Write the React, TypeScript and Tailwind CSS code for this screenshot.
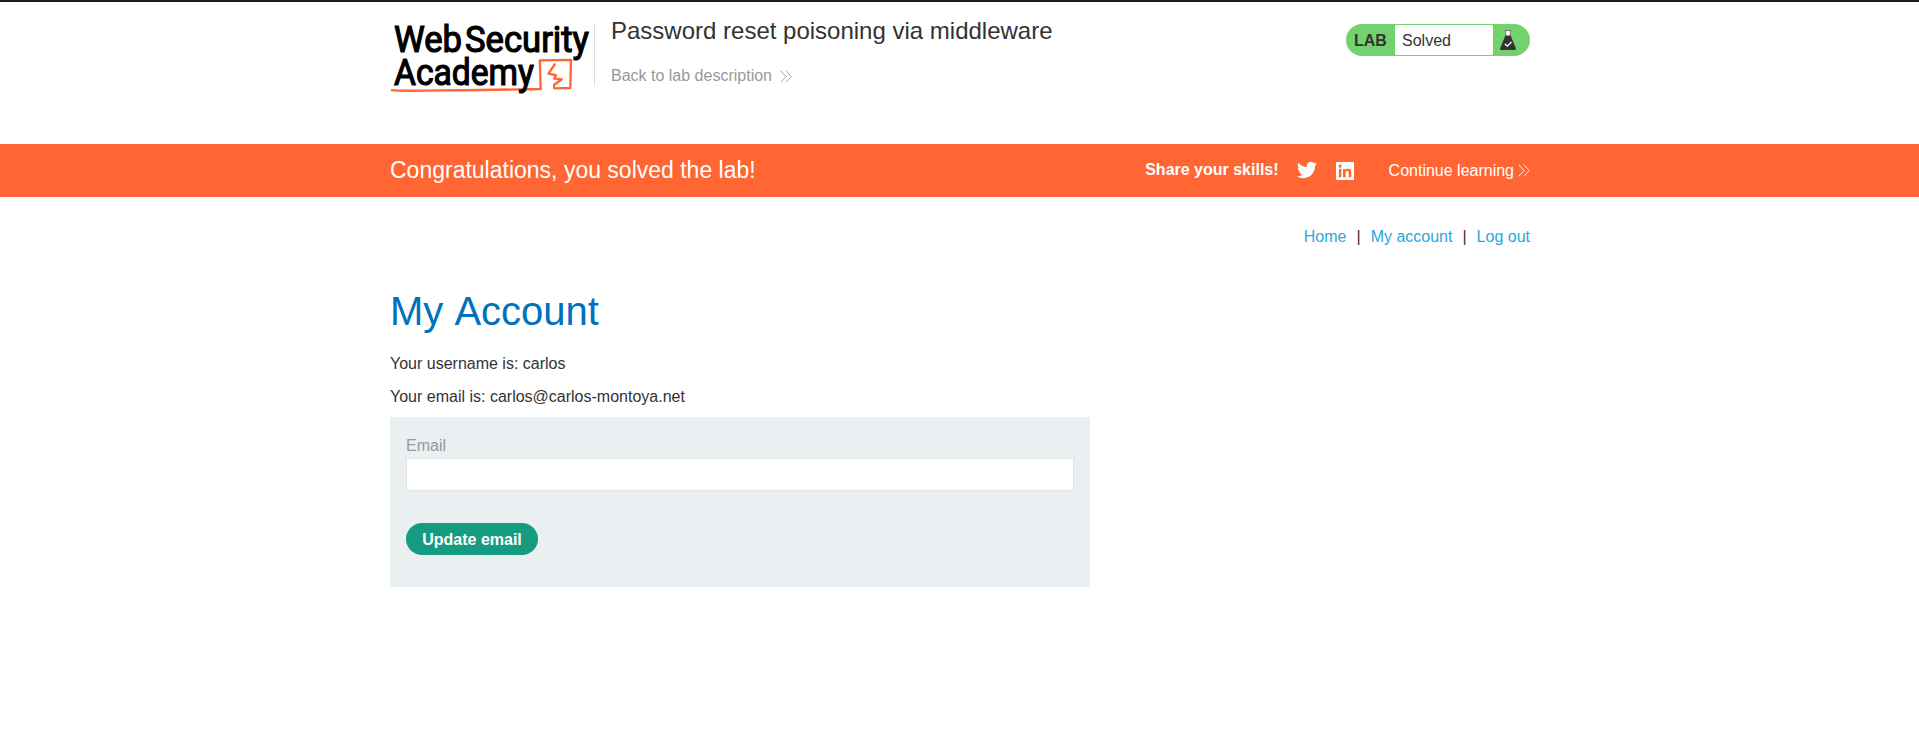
import React from "react";

function Logo() {
  return (
    <svg width="206" height="80" viewBox="390 18 206 80" className="block shrink-0 overflow-visible" aria-label="Web Security Academy">
      <g fill="none" stroke="#ff6633" strokeLinejoin="round">
        <path d="M391 90.2 C402 91.6 440 90.2 480 90 L540.7 89 L539.8 60.3 L571 59.8 L570.3 88 L554.3 88.3 L554 85 L561.8 79.3 L554.2 78.6 L556 75.2 L548.5 73.6 L555.3 63.5" strokeWidth="2.3" />
      </g>
      <g fill="#000" stroke="#000" strokeWidth="1.2" fontFamily="Roboto, 'Liberation Sans', sans-serif" fontWeight="400" fontSize="36">
        <text x="394" y="52" textLength="68" lengthAdjust="spacingAndGlyphs">Web</text>
        <text x="465" y="52" textLength="124" lengthAdjust="spacingAndGlyphs">Security</text>
        <text x="394" y="85" textLength="140" lengthAdjust="spacingAndGlyphs">Academy</text>
      </g>
    </svg>
  );
}

function Chevrons({ className }: { className?: string }) {
  return (
    <svg width="12" height="13" viewBox="0 0 12 13" className={className} fill="none" stroke="currentColor" strokeWidth="0.9">
      <path d="M0.8 0.8 L6 6.5 L0.8 12.2 M6 0.8 L11.2 6.5 L6 12.2" />
    </svg>
  );
}

function Flask() {
  return (
    <svg width="16" height="20" viewBox="0 0 16 20">
      <path d="M5.5 1 H10.5 V7 H5.5 Z" fill="#fff" />
      <path d="M4.5 0.5 H11.5 M5.7 1 V7 M10.3 1 V7" stroke="#777" strokeWidth="1" fill="none" />
      <path d="M5.4 5.5 H10.6 L16 18.5 Q16 20 14.8 20 H1.2 Q0 20 0 18.5 Z" fill="#333332" />
      <path d="M4.8 13.8 L7.3 16.2 L11.5 12" stroke="#fff" strokeWidth="1.3" fill="none" />
    </svg>
  );
}

function Twitter() {
  return (
    <svg width="20" height="20" viewBox="0 0 24 24" fill="#fff">
      <path d="M23.95 4.57a10 10 0 0 1-2.82.77 4.96 4.96 0 0 0 2.16-2.72c-.95.55-2 .96-3.13 1.18a4.92 4.92 0 0 0-8.38 4.48C7.69 8.1 4.07 6.13 1.64 3.16a4.92 4.92 0 0 0 1.52 6.57 4.9 4.9 0 0 1-2.23-.61v.06a4.92 4.92 0 0 0 3.95 4.83 5 5 0 0 1-2.21.08 4.94 4.94 0 0 0 4.6 3.42A9.87 9.87 0 0 1 0 19.54a13.99 13.99 0 0 0 7.55 2.21c9.05 0 14-7.5 14-13.98 0-.21 0-.42-.02-.63a9.94 9.94 0 0 0 2.46-2.55z" />
    </svg>
  );
}

function LinkedIn() {
  return (
    <svg width="18" height="18" viewBox="0 0 18 18">
      <rect width="18" height="18" rx="0.8" fill="#fff" />
      <g fill="#ff6633">
        <circle cx="4.1" cy="4.1" r="1.6" />
        <path d="M2.8 6.9 H5.4 V15.3 H2.8 Z" />
        <path d="M7 6.9 H9.5 V8.1 C10 7.2 11 6.7 12.2 6.7 C14.8 6.7 15.3 8.4 15.3 10.6 V15.3 H12.7 V11.2 C12.7 10.1 12.6 8.9 11.2 8.9 C9.8 8.9 9.6 10 9.6 11.1 V15.3 H7 Z" />
      </g>
    </svg>
  );
}

function Header() {
  return (
    <header className="mx-auto flex h-[142px] w-[1140px] items-start">
      <div className="pt-4">
        <Logo />
      </div>
      <div className="-ml-0.5 mt-[22px] h-[62px] w-px shrink-0 bg-[#dddddd]" />
      <div className="ml-4 flex-1 pt-[15px]">
        <h2 className="text-2xl leading-7">Password reset poisoning via middleware</h2>
        <a href="#" className="mt-[19px] flex items-center leading-6 text-[#999999]">
          Back to lab description
          <Chevrons className="ml-2" />
        </a>
      </div>
      <div className="mt-[22px] flex h-8 w-[184px] items-stretch overflow-hidden rounded-full bg-[#72d26e]">
        <div className="w-[49px] pl-2 pt-0.5 font-bold leading-[30px]">LAB</div>
        <div className="my-px w-[98px] bg-white pl-[7px] leading-[31px]">Solved</div>
        <div className="pl-[7px] pt-1.5">
          <Flask />
        </div>
      </div>
    </header>
  );
}

function Banner() {
  return (
    <section className="h-[53px] bg-[#ff6633] text-white">
      <div className="mx-auto flex h-full w-[1140px] items-center">
        <h4 className="-mt-0.5 flex-1 text-[23px] leading-7">Congratulations, you solved the lab!</h4>
        <span className="-mt-0.5 font-bold leading-6">Share your skills!</span>
        <a href="#" className="-mt-px ml-[18px]"><Twitter /></a>
        <a href="#" className="ml-[19px]"><LinkedIn /></a>
        <a href="#" className="ml-[35px] flex items-center leading-6">
          Continue learning
          <Chevrons className="ml-1" />
        </a>
      </div>
    </section>
  );
}

export default function App() {
  return (
    <div className="min-h-[739px] bg-white font-['Liberation_Sans',Arial,sans-serif] text-base text-[#333332]">
      <div className="h-0.5 bg-[#1c1b22]" />
      <div className="pl-px"><Header /></div>
      <div className="bg-[#ff6633] pl-px"><Banner /></div>
      <div className="pl-px">
        <main className="mx-auto w-[1140px]">
          <nav className="flex justify-end gap-[10px] pt-7 leading-6">
            <a href="#" className="text-[#29a7df]">Home</a>
            <span>|</span>
            <a href="#" className="text-[#29a7df]">My account</a>
            <span>|</span>
            <a href="#" className="text-[#29a7df]">Log out</a>
          </nav>
          <h1 className="mt-[39px] text-[40px] leading-[46px] text-[#0071bc] [font-kerning:none]">My Account</h1>
          <p className="mt-[18px] leading-6">Your username is: carlos</p>
          <p className="mt-[9px] leading-6">Your email is: carlos@carlos-montoya.net</p>
          <form className="mt-2 h-[170px] w-[700px] bg-[#eaeff2] px-4 pt-[17px]">
            <label className="block leading-6 text-[#999999]">Email</label>
            <input type="email" className="block h-[33px] w-full border border-[#e4e4e4] bg-white px-2 outline-none" />
            <button type="button" className="mt-8 h-8 w-[132px] rounded-full bg-[#159b80] pt-px font-bold text-white">Update email</button>
          </form>
        </main>
      </div>
    </div>
  );
}
